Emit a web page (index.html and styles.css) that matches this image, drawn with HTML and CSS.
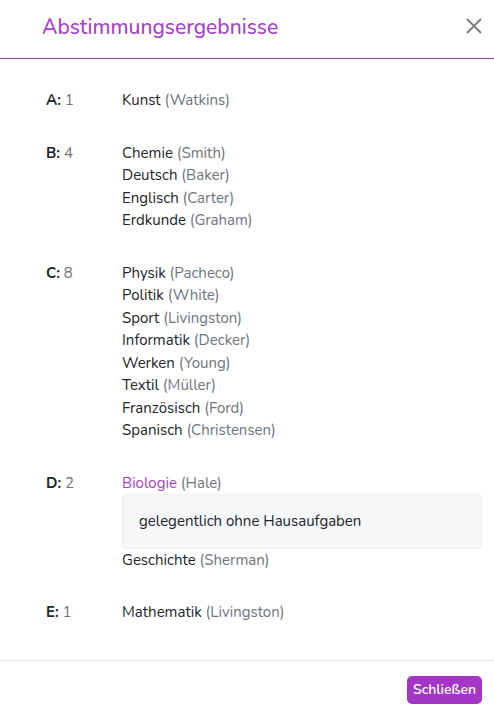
FILE: index.html
```html
<!DOCTYPE html>
<html lang="de">
<head>
<meta charset="utf-8">
<title>Abstimmungsergebnisse</title>
<link rel="stylesheet" href="styles.css">
</head>
<body>
<div class="modal">
  <header class="modal-header">
    <h1 class="modal-title">Abstimmungsergebnisse</h1>
    <button class="close" aria-label="Schließen">
      <svg width="16" height="16" viewBox="0 0 16 16"><path d="M1 1L15 15M15 1L1 15" stroke="#7a7a7a" stroke-width="1.8" fill="none"/></svg>
    </button>
  </header>
  <main class="modal-body">
    <div class="group">
      <div class="label"><b>A:</b> <span class="muted">1</span></div>
      <ul class="subjects">
        <li>Kunst <span class="muted">(Watkins)</span></li>
      </ul>
    </div>
    <div class="group">
      <div class="label"><b>B:</b> <span class="muted">4</span></div>
      <ul class="subjects">
        <li>Chemie <span class="muted">(Smith)</span></li>
        <li>Deutsch <span class="muted">(Baker)</span></li>
        <li>Englisch <span class="muted">(Carter)</span></li>
        <li>Erdkunde <span class="muted">(Graham)</span></li>
      </ul>
    </div>
    <div class="group">
      <div class="label"><b>C:</b> <span class="muted">8</span></div>
      <ul class="subjects">
        <li>Physik <span class="muted">(Pacheco)</span></li>
        <li>Politik <span class="muted">(White)</span></li>
        <li>Sport <span class="muted">(Livingston)</span></li>
        <li>Informatik <span class="muted">(Decker)</span></li>
        <li>Werken <span class="muted">(Young)</span></li>
        <li>Textil <span class="muted">(Müller)</span></li>
        <li>Französisch <span class="muted">(Ford)</span></li>
        <li>Spanisch <span class="muted">(Christensen)</span></li>
      </ul>
    </div>
    <div class="group">
      <div class="label"><b>D:</b> <span class="muted">2</span></div>
      <ul class="subjects">
        <li><span class="accent">Biologie</span> <span class="muted">(Hale)</span>
          <div class="comment">gelegentlich ohne Hausaufgaben</div>
        </li>
        <li>Geschichte <span class="muted">(Sherman)</span></li>
      </ul>
    </div>
    <div class="group">
      <div class="label"><b>E:</b> <span class="muted">1</span></div>
      <ul class="subjects">
        <li>Mathematik <span class="muted">(Livingston)</span></li>
      </ul>
    </div>
  </main>
  <footer class="modal-footer">
    <button class="btn">Schließen</button>
  </footer>
</div>
</body>
</html>
```

FILE: styles.css
```css
* { box-sizing: border-box; }
html, body { margin: 0; padding: 0; background: #fff; }
body {
  font-family: "Nunito", "Lato", "Noto Sans", sans-serif;
  font-size: 15px;
  line-height: 22.5px;
  color: #212529;
}
.modal { width: 494px; min-height: 718px; display: flex; flex-direction: column; }
.modal-header {
  display: flex;
  align-items: center;
  justify-content: space-between;
  height: 59px;
  padding: 0 12px 0 42px;
  border-bottom: 1px solid #a83fc8;
}
.modal-title {
  margin: 0;
  font-size: 21px;
  font-weight: 500;
  color: #a83fc8;
  line-height: 30px;
  padding-bottom: 5px;
}
.close {
  border: 0;
  background: none;
  padding: 0;
  width: 16px;
  height: 16px;
  display: flex;
  margin-bottom: 6px;
}
.modal-body { padding: 30px 12px 6px 46px; }
.group { display: grid; grid-template-columns: 76px 1fr; margin-bottom: 30px; }
.label b { font-weight: 700; }
.muted { color: #6c757d; }
.accent { color: #a83fc8; }
.subjects { list-style: none; margin: 0; padding: 0; }
.comment {
  background: #f6f7f9;
  border: 1px solid #eef0f2;
  border-radius: 3px;
  padding: 15px 16px;
}
.modal-footer {
  border-top: 1px solid #dee2e6;
  display: flex;
  justify-content: flex-end;
  padding: 15px 12px 12px;
}
.btn {
  font-family: inherit;
  font-size: 14px;
  font-weight: 600;
  color: #fff;
  background: #a336c4;
  border: 0;
  border-radius: 5px;
  height: 28px;
  width: 75px;
  padding: 0;
}
```
